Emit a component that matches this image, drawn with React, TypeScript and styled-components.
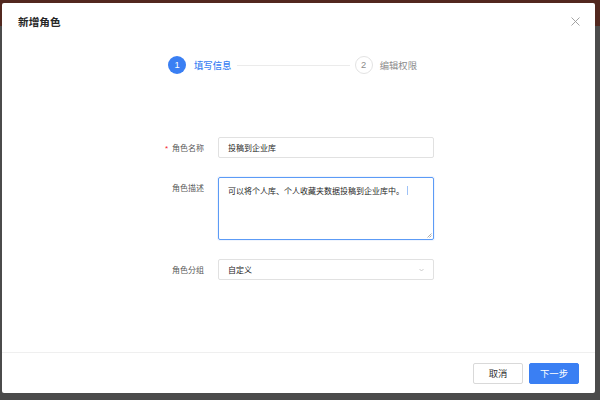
import React from "react";
import styled, { createGlobalStyle } from "styled-components";

const Global = createGlobalStyle`
  html, body { margin: 0; padding: 0; }
  body {
    font-family: "Noto Sans CJK SC", "Noto Sans", "Liberation Sans", sans-serif;
    -webkit-font-smoothing: antialiased;
  }
  * { box-sizing: border-box; }
`;

const Backdrop = styled.div`
  width: 600px;
  height: 400px;
  overflow: hidden;
  display: flex;
  padding: 3px 5px 7px 2px;
  background: linear-gradient(to bottom, #52281f 0, #52281f 26px, #4b4b4b 26px, #4b4b4b 100%);
`;

const Modal = styled.div`
  width: 593px;
  height: 390px;
  background: #fff;
  border-radius: 2px;
  display: flex;
  flex-direction: column;
`;

const Header = styled.div`
  height: 36px;
  padding: 0 14px 0 16px;
  display: flex;
  align-items: center;
  justify-content: space-between;
  flex: none;
`;

const Title = styled.div`
  font-size: 10.67px;
  line-height: 15px;
  font-weight: 600;
  color: #262626;
`;

const Close = styled.button`
  border: 0;
  background: none;
  padding: 0;
  width: 12px;
  height: 12px;
  display: flex;
  align-items: center;
  justify-content: center;
`;

const Body = styled.div`
  flex: 1;
  padding-top: 17px;
`;

const Steps = styled.div`
  margin-left: 166px;
  width: 249px;
  height: 18px;
  display: flex;
  align-items: center;
`;

const StepIcon = styled.div<{ $active?: boolean }>`
  width: 18px;
  height: 18px;
  border-radius: 50%;
  flex: none;
  display: flex;
  align-items: center;
  justify-content: center;
  font-family: "Liberation Sans", "Noto Sans", sans-serif;
  font-size: 9.33px;
  background: ${(p) => (p.$active ? "#3a7ff3" : "#fff")};
  color: ${(p) => (p.$active ? "#fff" : "#8c8c8c")};
  border: ${(p) => (p.$active ? "none" : "1px solid #e3e3e3")};
`;

const StepTitle = styled.div<{ $active?: boolean }>`
  font-size: 9.33px;
  line-height: 14px;
  white-space: nowrap;
  font-weight: ${(p) => (p.$active ? 500 : 400)};
  color: ${(p) => (p.$active ? "#3a7ff3" : "#8c8c8c")};
  margin-left: ${(p) => (p.$active ? "8px" : "7px")};
`;

const StepLine = styled.div`
  flex: 1;
  height: 1px;
  background: #ebebeb;
  margin: 0 5px 0 6px;
`;

const Form = styled.div`
  margin: 63px 0 0 146px;
  display: grid;
  grid-template-columns: 56px 216px;
  column-gap: 14px;
  row-gap: 19px;
  align-items: start;
`;

const Label = styled.div`
  height: 21px;
  line-height: 21px;
  font-size: 8px;
  color: #595959;
  text-align: right;
  white-space: nowrap;
`;

const Star = styled.span`
  color: #f5222d;
  margin-right: 4px;
  font-family: "Liberation Sans", sans-serif;
`;

const Field = styled.div<{ $focused?: boolean; $tall?: boolean }>`
  position: relative;
  height: ${(p) => (p.$tall ? "63px" : "21px")};
  border: 1px solid ${(p) => (p.$focused ? "#5c9bf6" : "#e1e1e1")};
  border-radius: 2px;
  padding: ${(p) => (p.$tall ? "6px 9px" : "0 9px")};
  font-size: 8px;
  line-height: 19px;
  color: #262626;
  display: flex;
  align-items: ${(p) => (p.$tall ? "flex-start" : "center")};
  justify-content: space-between;
  box-shadow: ${(p) => (p.$focused ? "0 0 0 1px rgba(58,127,243,0.08)" : "none")};
`;

const TextLine = styled.div`
  line-height: 8px;
  padding-top: 2px;
  display: flex;
  align-items: center;
`;

const Caret = styled.span`
  display: inline-block;
  width: 1px;
  height: 9px;
  background: #9ec2f7;
  margin-left: 3px;
`;

const Grip = styled.svg`
  position: absolute;
  right: 1px;
  bottom: 1px;
`;

const Footer = styled.div`
  flex: none;
  height: 41px;
  border-top: 1px solid #efefef;
  padding: 0 16px;
  display: flex;
  align-items: center;
  justify-content: flex-end;
  gap: 6px;
`;

const Button = styled.button<{ $primary?: boolean }>`
  width: 50px;
  height: 21px;
  border-radius: 2px;
  font-family: "Noto Sans CJK SC", sans-serif;
  font-size: 9.33px;
  padding: 0;
  display: flex;
  align-items: center;
  justify-content: center;
  border: 1px solid ${(p) => (p.$primary ? "#3a7ff3" : "#d9d9d9")};
  background: ${(p) => (p.$primary ? "#3a7ff3" : "#fff")};
  color: ${(p) => (p.$primary ? "#fff" : "#333")};
`;

export default function App() {
  return (
    <>
      <Global />
      <Backdrop>
        <Modal>
          <Header>
            <Title>新增角色</Title>
            <Close aria-label="close">
              <svg width="9" height="9" viewBox="0 0 9 9">
                <path d="M0.5 0.5 L8.5 8.5 M8.5 0.5 L0.5 8.5" stroke="#9a9a9a" strokeWidth="0.9" fill="none" />
              </svg>
            </Close>
          </Header>
          <Body>
            <Steps>
              <StepIcon $active>1</StepIcon>
              <StepTitle $active>填写信息</StepTitle>
              <StepLine />
              <StepIcon>2</StepIcon>
              <StepTitle>编辑权限</StepTitle>
            </Steps>
            <Form>
              <Label>
                <Star>*</Star>角色名称
              </Label>
              <Field>投稿到企业库</Field>
              <Label>角色描述</Label>
              <Field $focused $tall>
                <TextLine>
                  可以将个人库、个人收藏夹数据投稿到企业库中。
                  <Caret />
                </TextLine>
                <Grip width="5" height="5" viewBox="0 0 5 5">
                  <path d="M4.5 0.5 L0.5 4.5 M4.5 2.5 L2.5 4.5" stroke="#8c8c8c" strokeWidth="0.7" />
                </Grip>
              </Field>
              <Label>角色分组</Label>
              <Field>
                <span>自定义</span>
                <svg width="5" height="4" viewBox="0 0 5 4">
                  <path d="M0.5 1 L2.5 3 L4.5 1" stroke="#bfbfbf" strokeWidth="0.8" fill="none" />
                </svg>
              </Field>
            </Form>
          </Body>
          <Footer>
            <Button>取消</Button>
            <Button $primary>下一步</Button>
          </Footer>
        </Modal>
      </Backdrop>
    </>
  );
}
